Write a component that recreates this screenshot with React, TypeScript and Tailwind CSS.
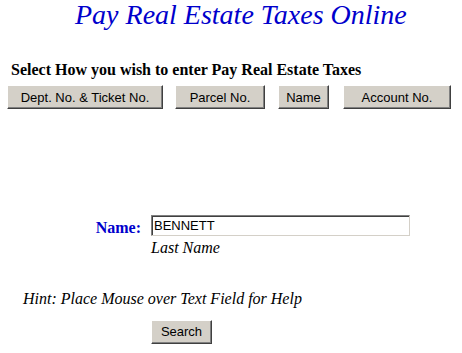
const serif = "font-['Liberation_Serif','Times_New_Roman',serif]";
const sans = "font-['Liberation_Sans',Arial,sans-serif]";

const btn = `h-[24px] bg-[#d4d0c8] text-black text-[13px] ${sans} border border-t-white border-l-white border-b-[#404040] border-r-[#404040] shadow-[inset_-1px_-1px_#808080] leading-none`;

export default function App() {
  const options = [
    { label: "Dept. No. & Ticket No.", cls: "w-[156px]" },
    { label: "Parcel No.", cls: "w-[90px] ml-[12px]" },
    { label: "Name", cls: "w-[51px] ml-[13px]" },
    { label: "Account No.", cls: "w-[108px] ml-[14px]" },
  ];

  return (
    <div className={`w-[462px] h-[353px] bg-white overflow-hidden ${serif}`}>
      {/* Title */}
      <h1 className={`pl-[75px] text-[28px] italic text-[#0000cc] leading-[30px] font-normal ${serif}`}>
        Pay Real Estate Taxes Online
      </h1>

      {/* Choices */}
      <div className={`mt-[31px] pl-[11px] text-[16px] font-bold text-black leading-[18px] ${serif}`}>
        Select How you wish to enter Pay Real Estate Taxes
      </div>
      <div className="mt-[6px] pl-[7px] flex">
        {options.map((o) => (
          <button key={o.label} className={`${btn} ${o.cls}`}>
            {o.label}
          </button>
        ))}
      </div>

      {/* Name field */}
      <div className="mt-[106px] flex items-start">
        <label className={`w-[141px] pt-[4px] text-right text-[16px] font-bold text-[#0000cc] leading-[18px] ${serif}`}>
          Name:
        </label>
        <div className="ml-[10px] flex flex-col">
          <input
            defaultValue="BENNETT"
            className={`w-[259px] h-[21px] px-[2px] text-[13px] text-black ${sans} border border-t-[#808080] border-l-[#808080] border-b-[#d4d0c8] border-r-[#d4d0c8] shadow-[inset_1px_1px_#404040] outline-none`}
          />
          <span className={`mt-[3px] text-[16px] italic text-black leading-[18px] ${serif}`}>Last Name</span>
        </div>
      </div>

      {/* Hint */}
      <p className={`mt-[33px] pl-[23px] text-[16px] italic text-black leading-[18px] ${serif}`}>
        Hint: Place Mouse over Text Field for Help
      </p>

      <div className="mt-[11px] pl-[151px]">
        <button className={`${btn} w-[61px]`}>Search</button>
      </div>
    </div>
  );
}
